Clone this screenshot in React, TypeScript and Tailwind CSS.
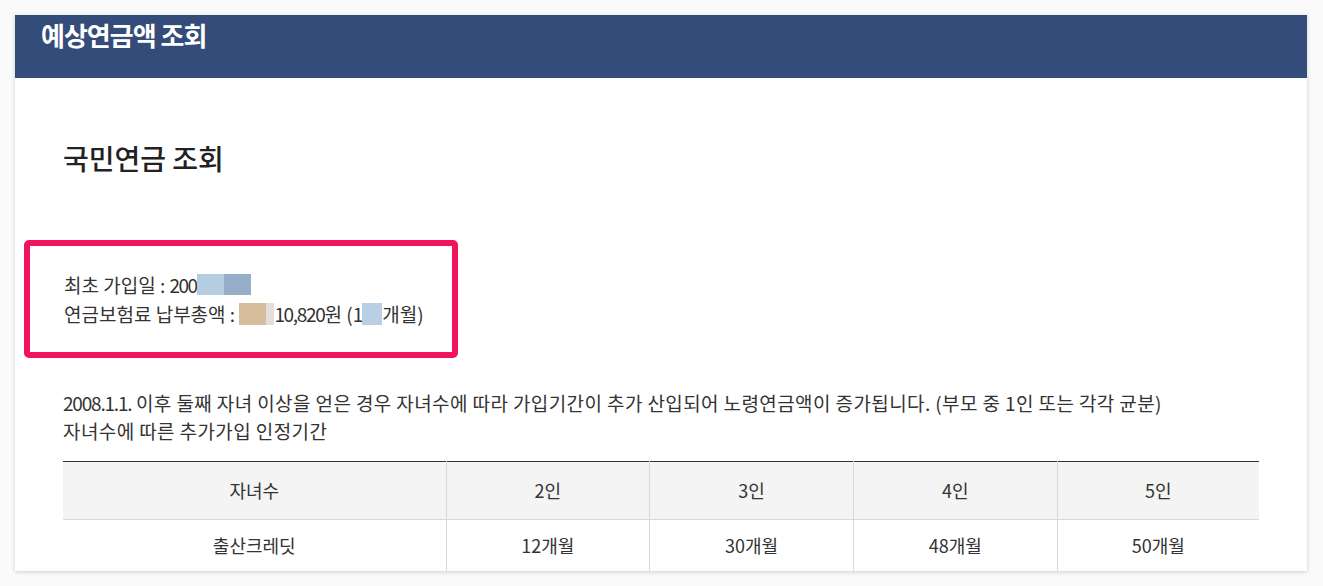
export default function App() {
  const font = {
    fontFamily: '"Noto Sans CJK KR", "Noto Sans", sans-serif',
  };

  const heads = ["2인", "3인", "4인", "5인"];
  const values = ["12개월", "30개월", "48개월", "50개월"];

  return (
    <div className="w-[1323px] h-[586px] bg-[#fafafa] pt-[15px] pl-[15px]" style={font}>
      {/* 카드 */}
      <div className="w-[1292px] h-[556px] bg-white overflow-hidden shadow-[0_1px_4px_rgba(0,0,0,0.18)]">
        {/* 헤더 */}
        <div className="h-[63px] bg-[#344c7a] pl-[26px] pt-[2px]">
          <h1 className="text-[26px] leading-[36px] font-bold text-white tracking-[-1px]">
            예상연금액 조회
          </h1>
        </div>

        <div className="pl-[48px] pr-[48px] text-[#333]">
          <h2 className="mt-[61px] text-[28px] leading-[38px] font-medium text-[#222]">
            국민연금 조회
          </h2>

          {/* 강조 박스 */}
          <div className="mt-[63px] -ml-[39px] w-[434px] h-[118px] border-[6px] border-[#f2145b] rounded-[5px] pl-[34px] pt-[24px] text-[19px] leading-[29px]">
            <div className="flex items-center">
              <span>최초 가입일 :&nbsp;</span>
              <span className="tracking-[-1.5px]">200</span>
              <span className="inline-block w-[27px] h-[21px] bg-[#b4cde0]" />
              <span className="inline-block w-[27px] h-[21px] bg-[#97aec8]" />
            </div>
            <div className="flex items-center">
              <span>연금보험료 납부총액 :&nbsp;</span>
              <span className="inline-block w-[27px] h-[22px] bg-[#d6bd9c]" />
              <span className="inline-block w-[8px] h-[22px] bg-[#e2dedb]" />
              <span className="tracking-[-1.3px]">10,820</span>
              <span>원 (</span>
              <span className="tracking-[-1px]">1</span>
              <span className="inline-block w-[20px] h-[22px] bg-[#b9d0e4]" />
              <span>개월)</span>
            </div>
          </div>

          {/* 안내문 */}
          <div className="mt-[31px] text-[19px] leading-[28px] tracking-[0.4px]">
            <p>
              <span className="tracking-[-1.2px]">2008.1.1.</span> 이후 둘째 자녀 이상을 얻은 경우 자녀수에 따라 가입기간이 추가 산입되어 노령연금액이 증가됩니다. (부모 중 1인 또는 각각 균분)
            </p>
            <p>자녀수에 따른 추가가입 인정기간</p>
          </div>

          {/* 표 */}
          <table className="mt-[16px] w-[1196px] border-collapse border-t border-[#333] text-[18px] text-center">
            <thead>
              <tr className="h-[58px] bg-[#f4f4f4]">
                <th className="w-[383px] font-normal border-r border-b border-[#d9d9d9]">자녀수</th>
                {heads.map((h, i) => (
                  <th
                    key={h}
                    className={
                      i === heads.length - 1
                        ? "font-normal border-b border-[#d9d9d9]"
                        : "font-normal border-r border-b border-[#d9d9d9]"
                    }
                  >
                    {h}
                  </th>
                ))}
              </tr>
            </thead>
            <tbody>
              <tr className="h-[52px]">
                <td className="border-r border-b border-[#d9d9d9]">출산크레딧</td>
                {values.map((v, i) => (
                  <td
                    key={v}
                    className={
                      i === values.length - 1
                        ? "border-b border-[#d9d9d9]"
                        : "border-r border-b border-[#d9d9d9]"
                    }
                  >
                    {v}
                  </td>
                ))}
              </tr>
            </tbody>
          </table>
        </div>
      </div>
    </div>
  );
}
